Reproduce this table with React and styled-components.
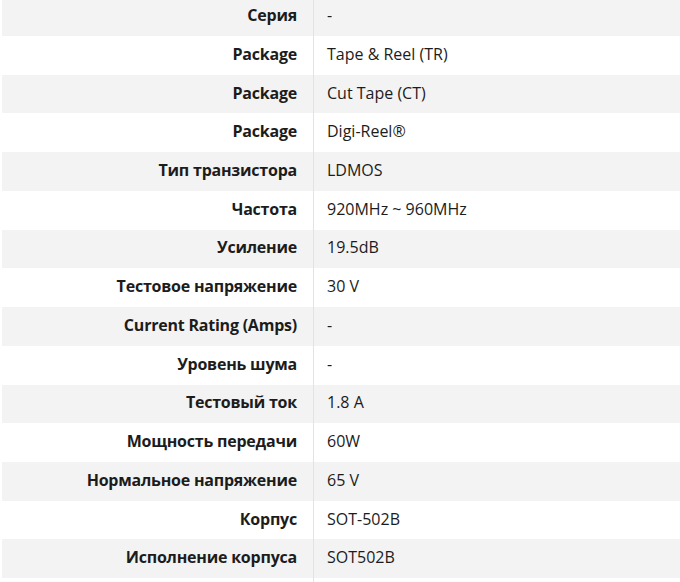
import React from "react";
import styled, { createGlobalStyle } from "styled-components";

const GlobalStyle = createGlobalStyle`
  html, body {
    margin: 0;
    padding: 0;
    background: #fff;
    overflow: hidden;
  }
  body {
    font-family: "Open Sans", "Liberation Sans", Arial, sans-serif;
    color: #1c1c1c;
  }
`;

const Table = styled.div`
  display: grid;
  grid-template-columns: 312px 1fr;
  grid-auto-rows: 38.72px;
  margin: -2.7px 0 0 2px;
  width: 678px;
`;

const Label = styled.div`
  display: flex;
  align-items: center;
  justify-content: flex-end;
  padding: 0 16px 3px 0;
  border-right: 1px solid #e3e3e3;
  background: ${(p) => (p.shaded ? "#f3f3f3" : "#fff")};
  font-size: 16px;
  font-weight: 700;
  letter-spacing: -0.22px;
  white-space: nowrap;
`;

const Value = styled.div`
  display: flex;
  align-items: center;
  padding: 0 0 3px 13px;
  background: ${(p) => (p.shaded ? "#f3f3f3" : "#fff")};
  font-size: 16px;
  font-weight: 400;
  white-space: nowrap;
`;

const specs = [
  ["Серия", "-"],
  ["Package", "Tape & Reel (TR)"],
  ["Package", "Cut Tape (CT)"],
  ["Package", "Digi-Reel®"],
  ["Тип транзистора", "LDMOS"],
  ["Частота", "920MHz ~ 960MHz"],
  ["Усиление", "19.5dB"],
  ["Тестовое напряжение", "30 V"],
  ["Current Rating (Amps)", "-"],
  ["Уровень шума", "-"],
  ["Тестовый ток", "1.8 A"],
  ["Мощность передачи", "60W"],
  ["Нормальное напряжение", "65 V"],
  ["Корпус", "SOT-502B"],
  ["Исполнение корпуса", "SOT502B"],
  ["", ""],
];

export default function App() {
  return (
    <>
      <GlobalStyle />
      <Table>
        {specs.map(([name, value], i) => (
          <React.Fragment key={i}>
            <Label shaded={i % 2 === 0 && name !== ""}>{name}</Label>
            <Value shaded={i % 2 === 0 && name !== ""}>{value}</Value>
          </React.Fragment>
        ))}
      </Table>
    </>
  );
}
